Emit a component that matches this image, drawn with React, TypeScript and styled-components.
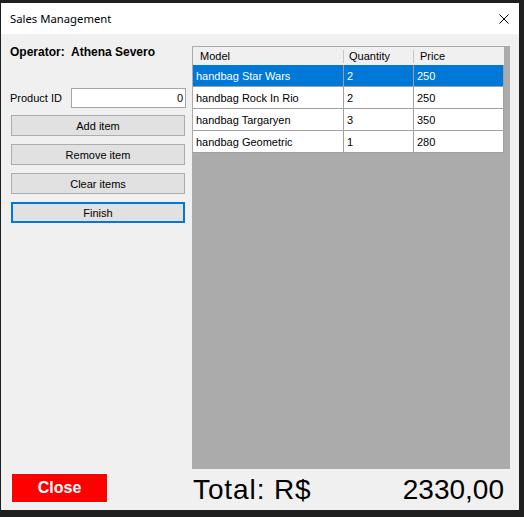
import React from "react";
import styled, { createGlobalStyle } from "styled-components";

const GlobalStyle = createGlobalStyle`
  html, body { margin: 0; padding: 0; background: #1f1f1f; }
  * { box-sizing: border-box; }
`;

const Screen = styled.div`
  width: 524px;
  height: 517px;
  background: #1f1f1f;
  padding: 3px 5px 7px 1px;
`;

const Window = styled.div`
  width: 518px;
  height: 507px;
  display: flex;
  flex-direction: column;
  background: #f0f0f0;
`;

const TitleBar = styled.div`
  height: 31px;
  flex: none;
  background: #ffffff;
  display: flex;
  align-items: center;
  justify-content: space-between;
  padding: 0 10px 0 9px;
  font-family: "Noto Sans", "Open Sans", sans-serif;
  font-size: 11.3px;
  color: #000;
`;

const Body = styled.div`
  flex: 1;
  display: grid;
  grid-template-columns: 176px 318px;
  grid-template-rows: 423px 34px;
  column-gap: 6px;
  padding: 12px 9px 7px 9px;
  font-family: "Liberation Sans", Arial, sans-serif;
  font-size: 11px;
  color: #000;
`;

const LeftPanel = styled.div`
  display: flex;
  flex-direction: column;
`;

const OperatorRow = styled.div`
  display: flex;
  font-weight: bold;
  font-size: 12px;
  line-height: 12px;
`;

const LabelCell = styled.span`
  width: 61px;
  flex: none;
`;

const FieldRow = styled.div`
  display: flex;
  align-items: center;
  height: 20px;
  margin-top: 30px;
`;

const TextBox = styled.div`
  width: 115px;
  height: 20px;
  background: #fff;
  border: 1px solid #a6a6a6;
  text-align: right;
  padding-right: 2px;
  line-height: 18px;
`;

const ButtonStack = styled.div`
  display: flex;
  flex-direction: column;
  gap: 8px;
  margin-top: 7px;
  padding-left: 1px;
`;

const FormButton = styled.div<{ $focused?: boolean }>`
  width: 174px;
  height: 21px;
  background: #e1e1e1;
  border: ${(p) => (p.$focused ? "2px solid #0078d7" : "1px solid #adadad")};
  display: flex;
  align-items: center;
  justify-content: center;
`;

const GridArea = styled.div`
  background: #ababab;
  padding: 1px;
`;

const GridTable = styled.div`
  width: 311px;
  display: flex;
  flex-direction: column;
`;

const GridRow = styled.div<{ $selected?: boolean; $header?: boolean }>`
  display: grid;
  grid-template-columns: 151px 70px 90px;
  height: ${(p) => (p.$header ? "18px" : "22px")};
  background: ${(p) => (p.$header ? "#f0f0f0" : p.$selected ? "#0078d7" : "#ffffff")};
  color: ${(p) => (p.$selected ? "#ffffff" : "#000000")};
`;

const HeaderCell = styled.div<{ $pad: number; $sep?: boolean }>`
  position: relative;
  display: flex;
  align-items: center;
  padding-left: ${(p) => p.$pad}px;
  ${(p) =>
    p.$sep
      ? `&::after {
    content: "";
    position: absolute;
    right: 0;
    top: 3px;
    bottom: 2px;
    width: 1px;
    background: #c8c8c8;
  }`
      : ""}
`;

const Cell = styled.div`
  display: flex;
  align-items: center;
  padding-left: 3px;
  border-right: 1px solid #a0a0a0;
  border-bottom: 1px solid #a0a0a0;
  white-space: nowrap;
`;

const CloseButton = styled.div`
  margin-top: 4px;
  margin-left: 1px;
  width: 97px;
  height: 30px;
  background: #ff0000;
  border: 1px solid #ffffff;
  color: #fff;
  font-weight: bold;
  font-size: 16px;
  display: flex;
  align-items: center;
  justify-content: center;
`;

const TotalRow = styled.div`
  display: flex;
  justify-content: space-between;
  align-items: flex-start;
  padding: 4px 6px 0 1px;
  font-size: 28px;
  line-height: 34px;
`;

const TotalLabel = styled.span`
  letter-spacing: 0.9px;
`;

const rows = [
  { model: "handbag Star Wars", qty: "2", price: "250" },
  { model: "handbag Rock In Rio", qty: "2", price: "250" },
  { model: "handbag Targaryen", qty: "3", price: "350" },
  { model: "handbag Geometric", qty: "1", price: "280" },
];

export default function App() {
  return (
    <>
      <GlobalStyle />
      <Screen>
        <Window>
          <TitleBar>
            <span>Sales Management</span>
            <svg width="10" height="10" viewBox="0 0 10 10">
              <path d="M0.5 0.5 L9.5 9.5 M9.5 0.5 L0.5 9.5" stroke="#000" strokeWidth="1" />
            </svg>
          </TitleBar>
          <Body>
            <LeftPanel>
              <OperatorRow>
                <LabelCell>Operator:</LabelCell>
                <span>Athena Severo</span>
              </OperatorRow>
              <FieldRow>
                <LabelCell>Product ID</LabelCell>
                <TextBox>0</TextBox>
              </FieldRow>
              <ButtonStack>
                <FormButton>Add item</FormButton>
                <FormButton>Remove item</FormButton>
                <FormButton>Clear items</FormButton>
                <FormButton $focused>Finish</FormButton>
              </ButtonStack>
            </LeftPanel>
            <GridArea>
              <GridTable>
                <GridRow $header>
                  <HeaderCell $pad={7} $sep>Model</HeaderCell>
                  <HeaderCell $pad={5} $sep>Quantity</HeaderCell>
                  <HeaderCell $pad={6}>Price</HeaderCell>
                </GridRow>
                {rows.map((r, i) => (
                  <GridRow key={r.model} $selected={i === 0}>
                    <Cell>{r.model}</Cell>
                    <Cell>{r.qty}</Cell>
                    <Cell>{r.price}</Cell>
                  </GridRow>
                ))}
              </GridTable>
            </GridArea>
            <CloseButton>Close</CloseButton>
            <TotalRow>
              <TotalLabel>Total: R$</TotalLabel>
              <span>2330,00</span>
            </TotalRow>
          </Body>
        </Window>
      </Screen>
    </>
  );
}
